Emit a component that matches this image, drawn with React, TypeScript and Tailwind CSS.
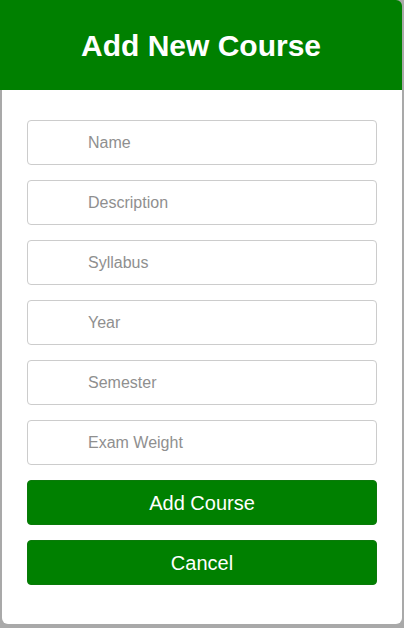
import React from 'react';

const fields = ['Name', 'Description', 'Syllabus', 'Year', 'Semester', 'Exam Weight'];

export default function App() {
  return (
    <div className="min-h-[628px] bg-[#a9a9a9] pr-[2px] font-['Liberation_Sans',Arial,sans-serif]">
      <div className="h-[90px] bg-[#008000] rounded-tr-[6px] flex items-center justify-center">
        <h1 className="text-[30px] font-bold text-white">Add New Course</h1>
      </div>
      <form className="ml-[2px] bg-white rounded-b-[6px] px-[25px] pt-[30px] pb-[39px] flex flex-col gap-[15px]">
        {fields.map(f => (
          <input
            key={f}
            type="text"
            placeholder={f}
            className="h-[45px] w-full border border-[#cccccc] rounded-[4px] pl-[60px] text-[16px] text-[#333] placeholder:text-[#8f8f8f] outline-none"
          />
        ))}
        <button type="button" className="h-[45px] w-full bg-[#008000] border border-[#0a7a0a] text-white text-[20px] rounded-[4px]">
          Add Course
        </button>
        <button type="button" className="h-[45px] w-full bg-[#008000] border border-[#0a7a0a] text-white text-[20px] rounded-[4px]">
          Cancel
        </button>
      </form>
    </div>
  );
}
